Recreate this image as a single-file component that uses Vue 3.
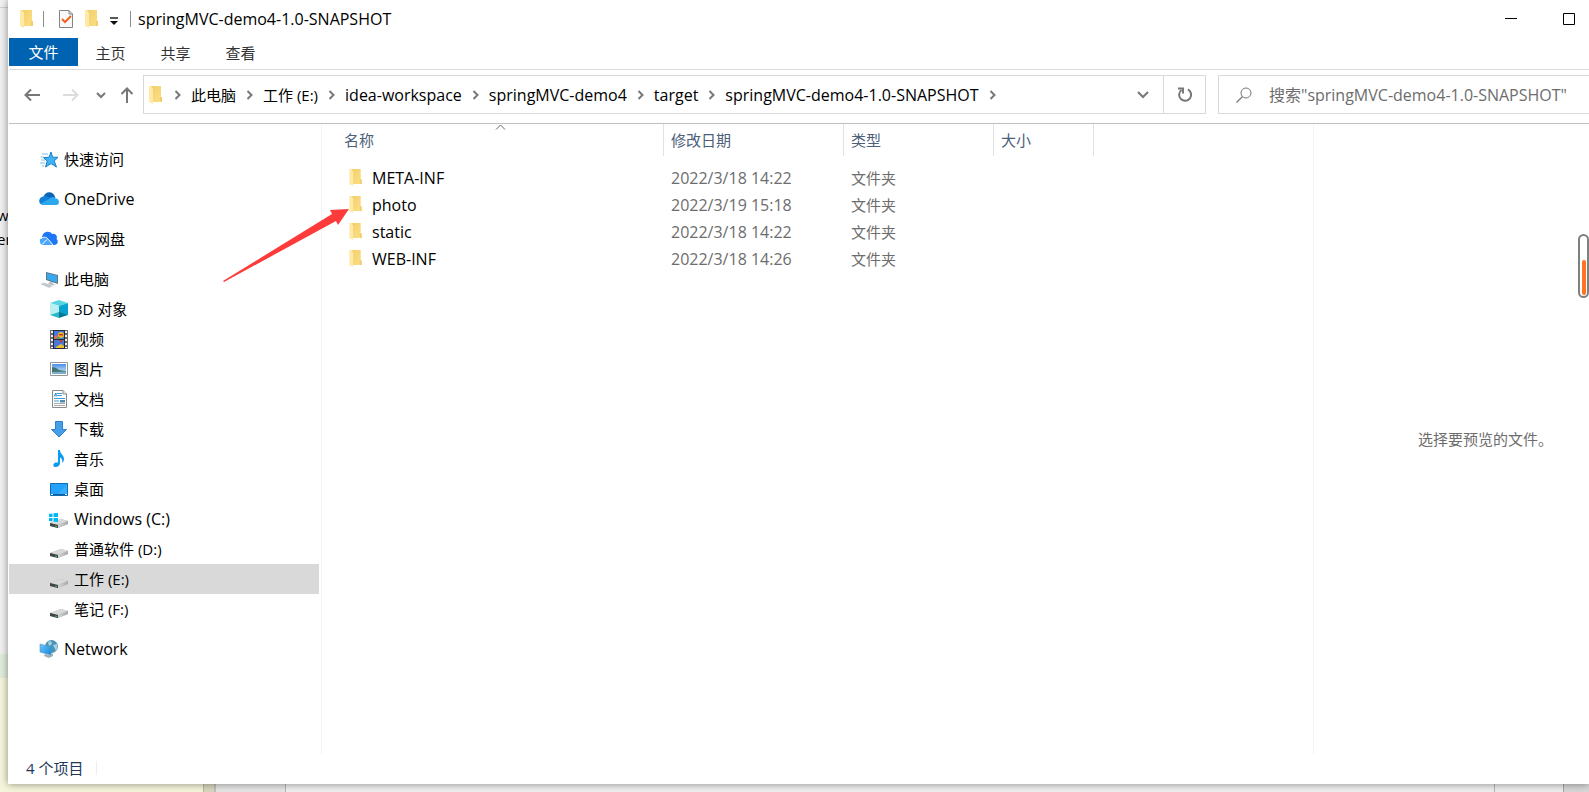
<script setup>
import { ref } from 'vue'

const tabs = ['主页', '共享', '查看']
const crumbs = ['此电脑', '工作 (E:)', 'idea-workspace', 'springMVC-demo4', 'target', 'springMVC-demo4-1.0-SNAPSHOT']
const query = ref('')
const places = [
  { name: '快速访问', icon: 'star', group: true },
  { name: 'OneDrive', icon: 'onedrive', group: true },
  { name: 'WPS网盘', icon: 'wps', group: true },
  { name: '此电脑', icon: 'pc', group: true },
  { name: '3D 对象', icon: 'cube' },
  { name: '视频', icon: 'video' },
  { name: '图片', icon: 'picture' },
  { name: '文档', icon: 'document' },
  { name: '下载', icon: 'download' },
  { name: '音乐', icon: 'music' },
  { name: '桌面', icon: 'desktop' },
  { name: 'Windows (C:)', icon: 'windrive' },
  { name: '普通软件 (D:)', icon: 'drive' },
  { name: '工作 (E:)', icon: 'drive', selected: true },
  { name: '笔记 (F:)', icon: 'drive' },
  { name: 'Network', icon: 'network', group: true },
]
const files = [
  { name: 'META-INF', date: '2022/3/18 14:22', type: '文件夹' },
  { name: 'photo', date: '2022/3/19 15:18', type: '文件夹' },
  { name: 'static', date: '2022/3/18 14:22', type: '文件夹' },
  { name: 'WEB-INF', date: '2022/3/18 14:26', type: '文件夹' },
]
// Latin-only labels are set one size larger than Chinese ones
const isLatin = (s) => /^[\x20-\x7e]+$/.test(s)
</script>

<template>
  <div class="desk">
    <svg class="defs" width="0" height="0" aria-hidden="true">
      <defs>
        <linearGradient id="gFolder" x1="0" y1="0" x2="1" y2="1">
          <stop offset="0" stop-color="#f3cf6c" /><stop offset="1" stop-color="#fbdf85" />
        </linearGradient>
        <linearGradient id="gSky" x1="0" y1="0" x2="0" y2="1">
          <stop offset="0" stop-color="#4a8fe8" /><stop offset="1" stop-color="#e8f4fb" />
        </linearGradient>
        <linearGradient id="gBlue" x1="0" y1="0" x2="1" y2="1">
          <stop offset="0" stop-color="#6cc8ff" /><stop offset="1" stop-color="#1487dc" />
        </linearGradient>
        <linearGradient id="gDrive" x1="0" y1="0" x2="1" y2="0">
          <stop offset="0" stop-color="#d6d6d8" /><stop offset="1" stop-color="#a9a9ac" />
        </linearGradient>
        <symbol id="folder" viewBox="0 0 13 18">
          <path d="M2 0H12V11H13V16H2Z" fill="url(#gFolder)" />
          <path d="M0 0H2L4 3V18L0 16Z" fill="#ffe9a6" />
          <path d="M11 11H13V16H11Z" fill="#f1cd70" />
        </symbol>
        <symbol id="drive" viewBox="0 0 20 20">
          <path d="M1 13L12 9L19 11V14L9 18L1 16Z" fill="#a5a5a8" />
          <path d="M1 13L12 9L19 11L9 15Z" fill="#d9d9dc" />
          <path d="M1 13L9 15V18L1 16Z" fill="#3e4643" />
          <path d="M9 15L19 11V14L9 18Z" fill="url(#gDrive)" />
          <path d="M6 15.5L8 16V17L6 16.5Z" fill="#4dbb54" />
        </symbol>
        <symbol id="windrive" viewBox="0 0 20 20">
          <use href="#drive" />
          <path d="M0 4L3.5 3.5V7H0ZM4.500 3.300L9 3V7H4.500ZM0 8H3.500V11.500L0 11ZM4.500 8H9V12L4.500 11.500Z" fill="#00b7f1" />
        </symbol>
        <symbol id="star" viewBox="0 0 20 20">
          <path d="M12 2L13.600 7.200L19 7.300L15.200 11L17.500 17L12 13.600L6.500 17L8.200 11L4.500 7.600L10 7.200Z" fill="#3fb2f5" stroke="#1b7fc4" stroke-width="1" stroke-linejoin="round" />
          <path d="M3 4H9M1.500 7H4M2.500 10H6M1 13H6M3 16H5" stroke="#83bfe8" stroke-width="1" />
        </symbol>
        <symbol id="onedrive" viewBox="0 0 20 20">
          <path d="M4 8C6 1 14 0 16.500 8L12 10Z" fill="#0a63b5" />
          <path d="M4.500 15C-1.500 15-1 7 4.500 6.500C7 5 9 6.500 11 8L14 15Z" fill="#1180d8" />
          <path d="M2 13.500L10 9C12 6.500 15.500 6.500 16.500 8.500C21 8.500 21 15 17 15H4.500C3.500 15 2.500 14.500 2 13.500Z" fill="#2aa7ee" />
        </symbol>
        <symbol id="wps" viewBox="0 0 20 20">
          <path d="M3 8C3 1 11 0 13 4C17 3 19 7 17.500 9C20 11 18.500 15 15.500 15H13L8 9Z" fill="#1e76f4" />
          <path d="M1 12C0 8 5 6 8 9L13.500 15H4C2 15 1 13.500 1 12Z" fill="#4aa6fb" />
          <path d="M2 8.500C5 6 8 7.500 9.500 9.500L14 15M3 14.500L8 9.500" stroke="#fff" stroke-width="1" fill="none" />
        </symbol>
        <symbol id="pc" viewBox="0 0 20 20">
          <path d="M7 2L19 5V14L7 10Z" fill="#5d7788" />
          <path d="M8 3.200L18 5.800V12.500L8 9.300Z" fill="#38a8ef" />
          <path d="M11 11.500L14 12.500V14L17 15L14 15.500L9 14Z" fill="#b8bfc4" />
          <path d="M1 14L5 12.500L14 16L10 18Z" fill="#d3d8dc" />
          <path d="M3 14L11 16.800M5 13.300L12 16" stroke="#a9b0b5" stroke-width=".6" />
        </symbol>
        <symbol id="cube" viewBox="0 0 20 20">
          <path d="M1 3L10 0L19 3L10 6Z" fill="#58d5e2" />
          <path d="M1 3L10 6V15L1 15Z" fill="#b9eff1" />
          <path d="M19 3L10 6V14L19 15Z" fill="#0aa3cf" />
          <path d="M1 15L10 12V18Z" fill="#27b9c6" />
          <path d="M19 15L10 12V18Z" fill="#067a92" />
        </symbol>
        <symbol id="video" viewBox="0 0 20 20">
          <path d="M1 0H19V19H1Z" fill="#6a6a6a" />
          <path d="M2 1H4V3H2ZM2 5H4V7H2ZM2 9H4V11H2ZM2 13H4V15H2ZM2 17H4V18H2ZM16 1H18V3H16ZM16 5H18V7H16ZM16 9H18V11H16ZM16 13H18V15H16ZM16 17H18V18H16Z" fill="#f0f0f0" />
          <path d="M4 0H16V19H4Z" fill="#202a3c" />
          <path d="M5 1H15V9H5ZM5 10H15V18H5Z" fill="#4a78d8" />
          <circle cx="12" cy="5" r="3" fill="#e8b828" /><path d="M10 4H14V5.500H10Z" fill="#d0382c" />
          <path d="M5 6L9 5V9H5Z" fill="#d56a70" /><path d="M8 7H11V9H8Z" fill="#4cae45" />
          <path d="M10 10H14L12 13Z" fill="#d33a2a" /><path d="M7 17L12 14L15 16V18H7Z" fill="#edc02e" />
        </symbol>
        <symbol id="picture" viewBox="0 0 20 20">
          <path d="M1.500 2.500H18.500V15.500H1.500Z" fill="#fff" stroke="#969696" />
          <path d="M3 4H17V14H3Z" fill="url(#gSky)" />
          <path d="M3 7Q7 7 10 10L17 11V14H3Z" fill="#417770" />
          <path d="M3 12L17 11.500V14H3Z" fill="#7bb0cd" />
        </symbol>
        <symbol id="document" viewBox="0 0 20 20">
          <path d="M3.500 .5H14L17.500 4V17.500H3.500Z" fill="#fff" stroke="#8a8a8a" />
          <path d="M14 .5V4H17.500" fill="#eee" stroke="#8a8a8a" />
          <path d="M8 3.500H13M7.500 5.500H13M5 8.500H16M5 11H10" stroke="#3c9bd8" />
          <path d="M5 6.500L7 3V6.500" stroke="#2485c8" fill="none" />
          <path d="M5 13.500H16M5 15.500H16" stroke="#aaa" />
          <path d="M11 10H16V12.500H11Z" fill="#4d8fae" />
        </symbol>
        <symbol id="download" viewBox="0 0 20 20">
          <path d="M6.500 1.500H13.500V9.500H17.500L10 17L2.500 9.500H6.500Z" fill="#459fe8" stroke="#2f80cc" />
        </symbol>
        <symbol id="music" viewBox="0 0 20 20">
          <path d="M9 0H11C11 4 15 5 15 9C15 11 14 12 13 13C14 9 12 8 11 7.500V13C11 16 8 17.500 6 17C3.500 16.500 4 13 7 12.500L9 12.600Z" fill="#0d9af2" />
        </symbol>
        <symbol id="desktop" viewBox="0 0 20 20">
          <path d="M1.500 3.500H18.500V15.500H1.500Z" fill="#22a2fa" stroke="#0e6db4" />
          <path d="M18 4V14L9 14Z" fill="#37adfc" />
          <path d="M2 14.500H18" stroke="#0c5e9c" /><path d="M2 14.500H4M16 14.500H18" stroke="#fff" />
        </symbol>
        <symbol id="network" viewBox="0 0 20 20">
          <circle cx="12.500" cy="6.500" r="6.500" fill="#4b94b8" />
          <path d="M9 2Q13 0 13 4L10 6ZM14 5L18 4Q19 8 17 11Z" fill="#a4d4e4" />
          <path d="M1 4L12 7V15L1 12Z" fill="url(#gBlue)" stroke="#4f93bb" stroke-width=".6" />
          <path d="M6 14L12 15V13L14 14V16L10 18L5 16Z" fill="#9ab0bb" />
        </symbol>
      </defs>
    </svg>

    <div class="behind-left" aria-hidden="true">
      <div class="strip-top"></div>
      <div class="strip-gray"><span>w</span><span>er</span></div>
      <div class="strip-green"></div>
      <div class="strip-yellow"></div>
    </div>

    <main class="window">
      <header class="titlebar">
        <svg class="folder" aria-hidden="true"><use href="#folder" /></svg>
        <i class="bar first"></i>
        <button class="plain" aria-label="属性">
          <svg width="16" height="20" viewBox="0 0 16 20">
            <path d="M1.500 1.500H11L14.500 5V18.500H1.500Z" fill="#f8f8f8" stroke="#848484" />
            <path d="M11 1.500V5H14.500" fill="none" stroke="#848484" />
            <path d="M4 10L7 13L13 7" fill="none" stroke="#f0641e" stroke-width="2" />
          </svg>
        </button>
        <button class="plain new" aria-label="新建文件夹"><svg class="folder"><use href="#folder" /></svg></button>
        <button class="plain more" aria-label="自定义快速访问工具栏">
          <svg width="8" height="8" viewBox="0 0 8 8"><path d="M0 1H8" stroke="#222" stroke-width="1.500" /><path d="M0 4H8L4 8Z" fill="#111" /></svg>
        </button>
        <i class="bar"></i>
        <h1>springMVC-demo4-1.0-SNAPSHOT</h1>
        <div class="controls">
          <button class="plain" aria-label="最小化"><svg width="14" height="14" viewBox="0 0 14 14"><path d="M1 6.500H13" stroke="#000" /></svg></button>
          <button class="plain" aria-label="最大化"><svg width="14" height="14" viewBox="0 0 14 14"><path d="M1.500 1.500H12.500V12.500H1.500Z" fill="none" stroke="#000" /></svg></button>
        </div>
      </header>

      <nav class="tabs">
        <button class="tab file">文件</button>
        <button v-for="t in tabs" :key="t" class="tab">{{ t }}</button>
      </nav>

      <div class="addressrow">
        <div class="history">
          <button class="plain" aria-label="返回"><svg width="16" height="14" viewBox="0 0 16 14"><path d="M16 7H1.500M7 1.500L1.500 7L7 12.500" fill="none" stroke="#777" stroke-width="2" /></svg></button>
          <button class="plain" aria-label="前进" disabled><svg width="16" height="14" viewBox="0 0 16 14"><path d="M0 7H14.500M9 1.500L14.500 7L9 12.500" fill="none" stroke="#dcdcdc" stroke-width="2" /></svg></button>
          <button class="plain recent" aria-label="最近位置"><svg width="10" height="8" viewBox="0 0 10 8"><path d="M1 2L5 6L9 2" fill="none" stroke="#777" stroke-width="2" /></svg></button>
          <button class="plain up" aria-label="向上"><svg width="14" height="16" viewBox="0 0 14 16"><path d="M7 16V1.500M1.500 7L7 1.500L12.500 7" fill="none" stroke="#777" stroke-width="2" /></svg></button>
        </div>
        <div class="address">
          <svg class="folder" aria-hidden="true"><use href="#folder" /></svg>
          <svg class="chev lead" viewBox="0 0 7 10"><path d="M1.500 1L5.500 5L1.500 9" /></svg>
          <template v-for="c in crumbs" :key="c">
            <button class="crumb" :class="{ latin: isLatin(c) }">{{ c }}</button>
            <svg class="chev" viewBox="0 0 7 10"><path d="M1.500 1L5.500 5L1.500 9" /></svg>
          </template>
          <button class="plain expand" aria-label="以前的位置"><svg width="12" height="8" viewBox="0 0 12 8"><path d="M1 1L6 6L11 1" fill="none" stroke="#777" stroke-width="2" /></svg></button>
          <button class="plain refresh" aria-label="刷新">
            <svg width="16" height="16" viewBox="0 0 16 16"><path d="M11 2.500A6 6 0 1 1 4.500 3" fill="none" stroke="#777" stroke-width="2" /><path d="M1 1.500H6V6.500" fill="none" stroke="#777" stroke-width="2" /></svg>
          </button>
        </div>
        <label class="search">
          <svg width="16" height="16" viewBox="0 0 16 16"><circle cx="10" cy="6" r="5" fill="none" stroke="#777" /><path d="M6.500 9.500L.5 15.500" stroke="#777" stroke-width="1.200" /></svg>
          <input v-model="query" type="text" aria-label="搜索" placeholder='搜索"springMVC-demo4-1.0-SNAPSHOT"' />
        </label>
      </div>

      <div class="body">
        <ul class="places">
          <li v-for="p in places" :key="p.name" :class="{ group: p.group, selected: p.selected }">
            <a href="#" :class="{ latin: isLatin(p.name) }"><svg class="icon" viewBox="0 0 20 20" aria-hidden="true"><use :href="'#' + p.icon" /></svg>{{ p.name }}</a>
          </li>
        </ul>

        <section class="listing">
          <table>
            <thead>
              <tr>
                <th class="c-name">名称<svg class="sort" viewBox="0 0 11 6"><path d="M1 5.500L5.500 1L10 5.500" fill="none" stroke="#666" /></svg></th>
                <th class="c-date">修改日期</th>
                <th class="c-type">类型</th>
                <th class="c-size">大小</th>
              </tr>
            </thead>
            <tbody>
              <tr v-for="f in files" :key="f.name">
                <td class="name"><span class="entry"><svg class="folder" aria-hidden="true"><use href="#folder" /></svg>{{ f.name }}</span></td>
                <td class="latin">{{ f.date }}</td>
                <td>{{ f.type }}</td>
                <td></td>
              </tr>
            </tbody>
          </table>
          <svg class="pointer" viewBox="0 0 126 74" aria-hidden="true">
            <path d="M0 72L109 5L107 1L126 0L115 16L113 12L1 73Z" fill="#fd3b3b" />
          </svg>
        </section>

        <aside class="preview">选择要预览的文件。</aside>
      </div>

      <footer class="status"><span>4 个项目</span></footer>
    </main>

    <div class="behind-bottom" aria-hidden="true">
      <div class="b-yellow"></div><div class="b-tan"></div><div class="b-gray"></div>
      <div class="b-wide"></div><div class="b-right"></div><div class="b-end"></div>
    </div>
    <div class="gauge" aria-hidden="true"><i></i></div>
  </div>
</template>

<style>
body { margin: 0; overflow: hidden; }
</style>

<style scoped>
* { box-sizing: border-box; }
.desk {
  position: relative;
  display: grid;
  grid-template-columns: 8px 1fr;
  grid-template-rows: 1fr 8px;
  height: 100vh;
  overflow: hidden;
  background: #e6e6e6;
  color: #000;
  font: 15px/20px "Open Sans", "Noto Sans CJK SC", sans-serif;
}
.defs { position: absolute; }
button, input { font: inherit; color: inherit; }
button { border: 0; background: none; padding: 0; white-space: nowrap; }
.plain { display: flex; align-items: center; justify-content: center; }
.folder { width: 13px; height: 18px; flex: none; }
.latin { font-size: 16px; }

.behind-left { display: flex; flex-direction: column; overflow: hidden; }
.strip-top { height: 8px; background: #f3f3f3; border-bottom: 1px solid #d4d4d4; }
.strip-gray { flex: 1; background: #f1f1f1; display: flex; flex-direction: column; padding-top: 195px; line-height: 24px; }
.strip-gray span { margin-left: -3px; }
.strip-green { height: 24px; background: #e1eddc; }
.strip-yellow { height: 106px; background: #f6f6dc; }

.window {
  display: flex;
  flex-direction: column;
  min-width: 0;
  background: #fff;
  padding-left: 1px;
  box-shadow: 0 0 8px rgba(0, 0, 0, 0.45);
  z-index: 1;
}
.titlebar { display: flex; align-items: center; height: 38px; padding-left: 11px; }
.bar { width: 1px; height: 16px; background: #8c8c8c; margin-right: 7px; }
.bar.first { margin: 0 14px 0 10px; }
.new { margin-left: 11px; }
.more { margin: 3px 12px 0 12px; }
h1 { margin: 0; font-size: 16px; font-weight: 400; }
.controls { display: flex; gap: 44px; margin-left: auto; padding-right: 13px; }

.tabs { display: flex; height: 32px; border-bottom: 1px solid #dadbdc; }
.tab { width: 65px; height: 28px; padding-top: 2px; color: #333; }
.tab.file { width: 69px; padding-top: 0; background: #0063b1; color: #fff; }

.addressrow { display: flex; align-items: center; height: 54px; padding-bottom: 4px; border-bottom: 1px solid #bfbfbf; }
.history { display: flex; align-items: center; width: 134px; padding-left: 15px; }
.history .plain { margin-right: 23px; }
.history .plain:nth-child(2) { margin-right: 17px; }
.history .recent { margin-right: 14px; }
.history .up { margin-right: 0; }
.address { display: flex; align-items: center; flex: 1; height: 39px; border: 1px solid #d9d9d9; padding-left: 5px; min-width: 0; }
.chev { width: 7px; height: 10px; margin: 0 10px; flex: none; fill: none; stroke: #777; stroke-width: 2; }
.chev.lead { margin-left: 12px; }
.expand { width: 40px; height: 37px; margin-left: auto; }
.refresh { width: 42px; height: 37px; border-left: 1px solid #d9d9d9; }
.search { display: flex; align-items: center; width: 372px; height: 39px; margin-left: 12px; margin-right: -1px; padding-left: 17px; border: 1px solid #d9d9d9; }
.search input { flex: 1; min-width: 0; margin-left: 17px; padding: 0; border: 0; outline: 0; background: none; font-size: 16px; }
.search input::placeholder { color: #6d6d6d; opacity: 1; }

.body { display: flex; flex: 1; min-height: 0; }
.places { list-style: none; margin: 0; padding: 10px 2px 0 0; width: 313px; border-right: 1px solid #f3f3f3; }
.places .group { margin-top: 10px; }
.places a { display: flex; align-items: center; gap: 5px; height: 30px; padding-left: 40px; color: inherit; text-decoration: none; }
.places .group a { padding-left: 30px; }
.places .selected { background: #d9d9d9; }
.icon { width: 20px; height: 20px; margin-top: 2px; overflow: visible; }

.listing { position: relative; flex: 1; min-width: 0; padding-left: 15px; }
table { border-collapse: separate; border-spacing: 0; table-layout: fixed; width: 757px; }
th { position: relative; height: 32px; padding: 0 0 0 7px; border-right: 1px solid #e2e2e2; color: #4c607a; font-weight: 400; text-align: left; }
.c-name { width: 327px; }
.c-date { width: 180px; }
.c-type { width: 150px; }
.c-size { width: 100px; }
.sort { position: absolute; top: 0; left: 50%; width: 11px; height: 6px; margin-left: -5px; }
tbody::before { content: ""; display: block; height: 8px; }
td { height: 27px; padding: 0 0 0 7px; color: #6d6d6d; }
td.name { padding-left: 12px; color: #000; font-size: 16px; }
.entry { display: flex; align-items: center; gap: 10px; height: 27px; }
.entry .folder { height: 17px; }
.pointer { position: absolute; left: -99px; top: 85px; width: 126px; height: 74px; }

.preview { display: flex; align-items: center; width: 276px; padding-left: 104px; border-left: 1px solid #f3f3f3; color: #6d6d6d; white-space: nowrap; }
.status { display: flex; align-items: center; height: 30px; padding: 0 0 2px 17px; color: #1e395b; }
.status span { padding-right: 13px; border-right: 1px solid #eee; line-height: 14px; }

.behind-bottom { grid-column: 1 / 3; display: flex; }
.b-yellow { width: 203px; background: #f6f6dc; }
.b-tan { width: 13px; background: #d9d9c0; border-left: 1px solid #b8b8a8; border-right: 2px solid #c2c2b8; }
.b-gray { width: 70px; background: #e6e6e6; border-right: 1px solid #b5b5b5; }
.b-wide { flex: 1; background: #f0f0f0; }
.b-right { width: 70px; background: #eee; border-left: 1px solid #b5b5b5; border-right: 1px solid #a5a5a5; }
.b-end { width: 25px; background: #d8d8d8; }

.gauge { position: absolute; z-index: 2; right: 0; top: 234px; width: 11px; height: 64px; padding: 24px 1px 1px; border: 2px solid #808080; border-radius: 6px; background: #fff; }
.gauge i { display: block; width: 4px; margin: 0 auto; height: 35px; border-radius: 2px; background: #ff7321; }
</style>
